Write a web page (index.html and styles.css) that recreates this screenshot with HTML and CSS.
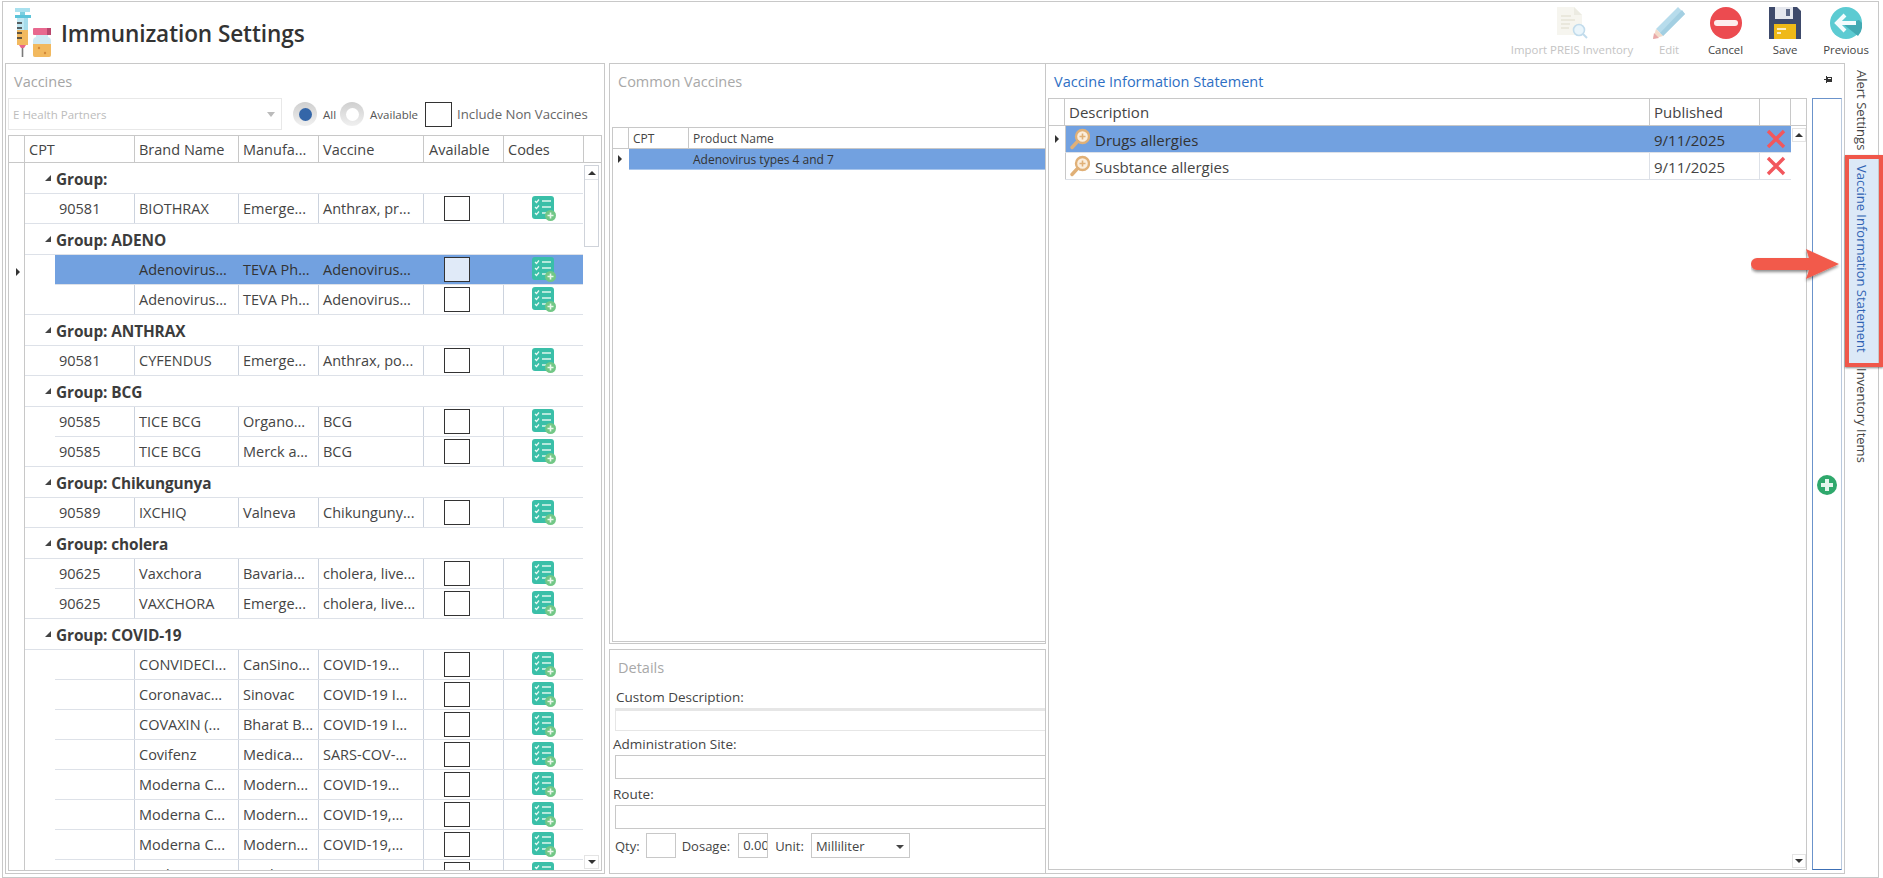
FILE: index.html
```html
<!DOCTYPE html>
<html lang="en">
<head>
<meta charset="utf-8">
<title>Immunization Settings</title>
<link rel="stylesheet" href="styles.css">
</head>
<body>
<svg class="defs" width="0" height="0" aria-hidden="true">
  <symbol id="codes" viewBox="0 0 24 25">
    <rect x="0" y="0" width="22" height="23" rx="3" fill="#3abfa8"/>
    <path d="M3 5l1.5 1.5L7 3.5M3 11l1.5 1.5L7 9.5M3 17l1.5 1.5L7 15.5" fill="none" stroke="#e6f8f3" stroke-width="1.2"/>
    <path d="M10 5h9M10 11h9M10 17h4" stroke="#b5e8dc" stroke-width="2"/>
    <circle cx="18.5" cy="19.5" r="5.5" fill="#72c786"/>
    <path d="M18.5 16.5v6M15.5 19.5h6" stroke="#e9f8ec" stroke-width="1.6"/>
  </symbol>
  <symbol id="mag" viewBox="0 0 20 22">
    <circle cx="12.5" cy="8.5" r="6.5" fill="#fbeedd" stroke="#e0b077" stroke-width="2.4"/>
    <path d="M7.5 13.5L2 19.5" stroke="#e0b077" stroke-width="3.4" stroke-linecap="round"/>
    <path d="M12.5 5.5v6M9.5 8.5h6" stroke="#e0b077" stroke-width="1.6"/>
  </symbol>
  <symbol id="cross" viewBox="0 0 20 20">
    <path d="M2 2l16 16M18 2L2 18" stroke="#f2575d" stroke-width="3.4"/>
  </symbol>
</svg>

<div class="frame">
  <header class="topbar">
    <div class="brand">
      <svg class="brand-icon" viewBox="0 0 40 50" width="40" height="50" aria-hidden="true">
        <path d="M1 0h15v4H1z" fill="#a9e1ef"/>
        <path d="M6 4h5v3H6z" fill="#7ccfe0"/>
        <path d="M1 7h16v3H1z" fill="#5cc4da"/>
        <path d="M3 10h11v12H3z" fill="#bfe7f2"/>
        <path d="M10 10h4v27h-4z" fill="#8fd4e6" opacity=".55"/>
        <path d="M3 22h11v15H3z" fill="#f2b95f"/>
        <path d="M3 15h5M3 20h5M3 25h5M3 30h5" stroke="#333" stroke-width="1.4"/>
        <path d="M5 37h7l-2 3H7z" fill="#e8658a"/>
        <path d="M8.5 40v9" stroke="#7a7a7a" stroke-width="1.6"/>
        <rect x="19" y="20" width="18" height="7" rx="1" fill="#e8688f"/>
        <rect x="33" y="20" width="4" height="7" fill="#b9476e"/>
        <rect x="22" y="27" width="12" height="2" fill="#cfe9f4"/>
        <path d="M19 33q0-4 4-4h10q4 0 4 4v14q0 2-2 2H21q-2 0-2-2z" fill="#cfe9f4"/>
        <path d="M19 36h18v11q0 2-2 2H21q-2 0-2-2z" fill="#f2b95f"/>
        <circle cx="25" cy="40" r="1.2" fill="#d2893a"/><circle cx="31" cy="45" r="1.2" fill="#d2893a"/>
      </svg>
      <h1 class="page-title">Immunization Settings</h1>
    </div>
    <nav class="toolbar">
      <button class="tool tool-import is-off" type="button">
        <svg viewBox="0 0 32 32" width="32" height="32" aria-hidden="true">
          <path d="M1 0h17l8 8v20H1z" fill="#f6f5ef"/>
          <path d="M18 0l8 8h-8z" fill="#ecebe2"/>
          <path d="M5 9h10M5 13h14M5 17h9M5 21h8" stroke="#e6e4d8" stroke-width="1.6"/>
          <circle cx="23" cy="23" r="5.5" fill="#eaf5fb" stroke="#c2dcec" stroke-width="1.6"/>
          <path d="M27 27l4 4" stroke="#c2dcec" stroke-width="2"/>
        </svg>
        <span>Import PREIS Inventory</span>
      </button>
      <button class="tool tool-edit is-off" type="button">
        <svg viewBox="0 0 32 32" width="32" height="32" aria-hidden="true">
          <path d="M25 0l7 7L10 29 3 22z" fill="#b7dcec"/>
          <path d="M29 3l3 4L10 29l-3-3z" fill="#a3cfe2"/>
          <path d="M3 22l7 7-10 3z" fill="#f3dccb"/>
          <path d="M0 32l1-6 5 5z" fill="#e9a8a8"/>
        </svg>
        <span>Edit</span>
      </button>
      <button class="tool tool-cancel" type="button">
        <svg viewBox="0 0 32 32" width="32" height="32" aria-hidden="true">
          <circle cx="16" cy="16" r="16" fill="#ec4b50"/>
          <rect x="4" y="13" width="24" height="6" rx="3" fill="#fdeeee"/>
        </svg>
        <span>Cancel</span>
      </button>
      <button class="tool tool-save" type="button">
        <svg viewBox="0 0 32 32" width="32" height="32" aria-hidden="true">
          <path d="M0 0h28l4 4v28H0z" fill="#3e4a6b"/>
          <rect x="6" y="0" width="18" height="12" fill="#e6e8ee"/>
          <rect x="17" y="2" width="4" height="7" fill="#5b6785"/>
          <rect x="5" y="17" width="22" height="15" fill="#efb917"/>
          <path d="M8 22h9M8 26h4" stroke="#fff" stroke-width="1.5"/>
        </svg>
        <span>Save</span>
      </button>
      <button class="tool tool-prev" type="button">
        <svg viewBox="0 0 32 32" width="32" height="32" aria-hidden="true">
          <circle cx="16" cy="16" r="16" fill="#5ccbd2"/>
          <path d="M13 17l15 12a16 16 0 0 0 4-13l-3-3-10 3z" fill="#43aab3"/>
          <path d="M15 8l-8 8 8 8M8 16h18" fill="none" stroke="#f4fcfd" stroke-width="4"/>
        </svg>
        <span>Previous</span>
      </button>
    </nav>
  </header>

  <main class="workspace">
    <section class="panel panel-vaccines">
      <h2 class="panel-title">Vaccines</h2>
      <div class="filters">
        <div class="combo"><span>E Health Partners</span><i class="combo-caret"></i></div>
        <span class="radio radio-on"><i></i></span><span class="radio-label label-all">All</span>
        <span class="radio"><i></i></span><span class="radio-label label-available">Available</span>
        <span class="filter-check"></span><span class="filter-label">Include Non Vaccines</span>
      </div>
      <div class="vgrid">
        <div class="vhead">
          <div class="vhead-corner"></div>
          <div class="vhead-cell w-cpt">CPT</div>
          <div class="vhead-cell w-brand">Brand Name</div>
          <div class="vhead-cell w-man">Manufa...</div>
          <div class="vhead-cell w-vac">Vaccine</div>
          <div class="vhead-cell w-av">Available</div>
          <div class="vhead-cell w-code">Codes</div>
        </div>
        <div class="vbody">
          <div class="row-gutter"><i class="row-marker marker-left"></i></div>
          <div class="vrows">
            <div class="group"><i class="tri"></i>Group:</div>
            <div class="drow"><div>90581</div><div>BIOTHRAX</div><div>Emerge...</div><div>Anthrax, pr...</div><div class="c-av"><span class="chk"></span></div><div class="c-code"><svg class="code-ic"><use href="#codes"/></svg></div></div>
            <div class="group"><i class="tri"></i>Group: ADENO</div>
            <div class="drow is-selected"><div></div><div>Adenovirus...</div><div>TEVA Ph...</div><div>Adenovirus...</div><div class="c-av"><span class="chk"></span></div><div class="c-code"><svg class="code-ic"><use href="#codes"/></svg></div></div>
            <div class="drow"><div></div><div>Adenovirus...</div><div>TEVA Ph...</div><div>Adenovirus...</div><div class="c-av"><span class="chk"></span></div><div class="c-code"><svg class="code-ic"><use href="#codes"/></svg></div></div>
            <div class="group"><i class="tri"></i>Group: ANTHRAX</div>
            <div class="drow"><div>90581</div><div>CYFENDUS</div><div>Emerge...</div><div>Anthrax, po...</div><div class="c-av"><span class="chk"></span></div><div class="c-code"><svg class="code-ic"><use href="#codes"/></svg></div></div>
            <div class="group"><i class="tri"></i>Group: BCG</div>
            <div class="drow"><div>90585</div><div>TICE BCG</div><div>Organo...</div><div>BCG</div><div class="c-av"><span class="chk"></span></div><div class="c-code"><svg class="code-ic"><use href="#codes"/></svg></div></div>
            <div class="drow"><div>90585</div><div>TICE BCG</div><div>Merck a...</div><div>BCG</div><div class="c-av"><span class="chk"></span></div><div class="c-code"><svg class="code-ic"><use href="#codes"/></svg></div></div>
            <div class="group"><i class="tri"></i>Group: Chikungunya</div>
            <div class="drow"><div>90589</div><div>IXCHIQ</div><div>Valneva</div><div>Chikunguny...</div><div class="c-av"><span class="chk"></span></div><div class="c-code"><svg class="code-ic"><use href="#codes"/></svg></div></div>
            <div class="group"><i class="tri"></i>Group: cholera</div>
            <div class="drow"><div>90625</div><div>Vaxchora</div><div>Bavaria...</div><div>cholera, live...</div><div class="c-av"><span class="chk"></span></div><div class="c-code"><svg class="code-ic"><use href="#codes"/></svg></div></div>
            <div class="drow"><div>90625</div><div>VAXCHORA</div><div>Emerge...</div><div>cholera, live...</div><div class="c-av"><span class="chk"></span></div><div class="c-code"><svg class="code-ic"><use href="#codes"/></svg></div></div>
            <div class="group"><i class="tri"></i>Group: COVID-19</div>
            <div class="drow"><div></div><div>CONVIDECI...</div><div>CanSino...</div><div>COVID-19...</div><div class="c-av"><span class="chk"></span></div><div class="c-code"><svg class="code-ic"><use href="#codes"/></svg></div></div>
            <div class="drow"><div></div><div>Coronavac...</div><div>Sinovac</div><div>COVID-19 I...</div><div class="c-av"><span class="chk"></span></div><div class="c-code"><svg class="code-ic"><use href="#codes"/></svg></div></div>
            <div class="drow"><div></div><div>COVAXIN (...</div><div>Bharat B...</div><div>COVID-19 I...</div><div class="c-av"><span class="chk"></span></div><div class="c-code"><svg class="code-ic"><use href="#codes"/></svg></div></div>
            <div class="drow"><div></div><div>Covifenz</div><div>Medica...</div><div>SARS-COV-...</div><div class="c-av"><span class="chk"></span></div><div class="c-code"><svg class="code-ic"><use href="#codes"/></svg></div></div>
            <div class="drow"><div></div><div>Moderna C...</div><div>Modern...</div><div>COVID-19...</div><div class="c-av"><span class="chk"></span></div><div class="c-code"><svg class="code-ic"><use href="#codes"/></svg></div></div>
            <div class="drow"><div></div><div>Moderna C...</div><div>Modern...</div><div>COVID-19,...</div><div class="c-av"><span class="chk"></span></div><div class="c-code"><svg class="code-ic"><use href="#codes"/></svg></div></div>
            <div class="drow"><div></div><div>Moderna C...</div><div>Modern...</div><div>COVID-19,...</div><div class="c-av"><span class="chk"></span></div><div class="c-code"><svg class="code-ic"><use href="#codes"/></svg></div></div>
            <div class="drow"><div></div><div>Moderna C...</div><div>Modern...</div><div>COVID-19,...</div><div class="c-av"><span class="chk"></span></div><div class="c-code"><svg class="code-ic"><use href="#codes"/></svg></div></div>
          </div>
          <div class="vscroll">
            <div class="scroll-up-thumb"><span class="sbtn"><i class="up"></i></span></div>
            <span class="sbtn sbtn-box"><i class="down"></i></span>
          </div>
        </div>
      </div>
    </section>

    <div class="middle">
      <section class="panel panel-common">
        <h2 class="panel-title title-mid">Common Vaccines</h2>
        <div class="cgrid">
          <div class="chead"><div class="chead-corner"></div><div class="chead-cpt">CPT</div><div class="chead-name">Product Name</div></div>
          <div class="cbody">
            <div class="c-gutter"><i class="row-marker"></i></div>
            <div class="crow"><div class="crow-cpt"></div><div class="crow-name">Adenovirus types 4 and 7</div></div>
          </div>
        </div>
      </section>
      <section class="panel panel-details">
        <h2 class="panel-title title-mid">Details</h2>
        <label class="field-label lbl-custom">Custom Description:</label>
        <div class="input input-disabled"></div>
        <label class="field-label lbl-site">Administration Site:</label>
        <div class="input input-site"></div>
        <label class="field-label lbl-route">Route:</label>
        <div class="input input-route"></div>
        <div class="qty-row">
          <span>Qty:</span><span class="mini"></span>
          <span class="dose-label">Dosage:</span><span class="mini mini-value">0.00</span>
          <span class="unit-label">Unit:</span>
          <span class="unit-select">Milliliter<i class="caret"></i></span>
        </div>
      </section>
    </div>

    <section class="panel-vis">
      <div class="vis-head">
        <h2 class="vis-title">Vaccine Information Statement</h2>
        <svg class="pin" viewBox="0 0 9 7" width="9" height="7" aria-hidden="true"><path d="M0 3h2v1H0zM2 0h1v7H2zM3 1h5v1H3zM3 5h5v1H3zM7 1h1v5H7zM3 2h4v3H3z" fill="#333"/><path d="M4 2h3v1H4z" fill="#fff"/></svg>
      </div>
      <div class="vis-body">
        <div class="sgrid">
          <div class="shead">
            <div class="shead-corner"></div>
            <div class="shead-desc">Description</div>
            <div class="shead-pub">Published</div>
            <div class="shead-x"></div>
          </div>
          <div class="sbody">
            <div class="s-gutter"><i class="row-marker"></i></div>
            <div class="srows">
              <div class="srow is-selected"><div class="s-desc"><svg class="mag-ic"><use href="#mag"/></svg><span class="s-text">Drugs allergies</span></div><div class="s-pub">9/11/2025</div><div class="s-x"><svg class="x-ic"><use href="#cross"/></svg></div></div>
              <div class="srow"><div class="s-desc"><svg class="mag-ic"><use href="#mag"/></svg><span class="s-text">Susbtance allergies</span></div><div class="s-pub">9/11/2025</div><div class="s-x"><svg class="x-ic"><use href="#cross"/></svg></div></div>
            </div>
            <div class="sscroll">
              <span class="sbtn sbtn-box"><i class="up"></i></span>
              <span class="sbtn sbtn-box"><i class="down"></i></span>
            </div>
          </div>
        </div>
        <div class="addstrip">
          <svg viewBox="0 0 20 20" width="20" height="20" aria-hidden="true">
            <circle cx="10" cy="10" r="10" fill="#2fa86c"/>
            <path d="M10 4v12M4 10h12" stroke="#e4f6ec" stroke-width="4"/>
          </svg>
        </div>
      </div>
    </section>

    <aside class="tabs">
      <div class="tab tab-alert">Alert Settings</div>
      <div class="tab tab-vis">Vaccine Information Statement</div>
      <div class="tab tab-inv">Inventory Items</div>
    </aside>
  </main>
</div>

<div class="callout-box"></div>
<svg class="callout-arrow" viewBox="0 0 92 36" width="92" height="36" aria-hidden="true">
  <defs><filter id="sh" x="-10%" y="-20%" width="120%" height="150%"><feDropShadow dx="0" dy="2" stdDeviation="1.500" flood-color="#000" flood-opacity=".45"/></filter></defs>
  <path d="M6 11h52l-3-9 33 15-33 15 3-9H6a5.500 5.500 0 0 1 0-12z" fill="#f25a4b" filter="url(#sh)"/>
</svg>
</body>
</html>
```
FILE: styles.css
```css
* { box-sizing: border-box; }
html, body { margin: 0; padding: 0; height: 878px; overflow: hidden; background: #fff; }
body { font-family: "Open Sans", "Noto Sans", sans-serif; color: #444; position: relative; }
.defs { position: absolute; }
h1, h2 { margin: 0; font-weight: 400; }
i { display: block; }

.frame { margin: 1px 4px 0 2px; height: 877px; border: 1px solid #c8c8c8; }

/* top bar */
.topbar { height: 61px; display: flex; justify-content: space-between; }
.brand { display: flex; align-items: flex-start; padding: 5px 0 0 11px; }
.brand-icon { margin-top: 1px; }
.page-title { font-size: 22.6px; font-weight: 600; color: #333; margin: 11px 0 0 7px; line-height: 32px; letter-spacing: -.1px; }
.toolbar { display: flex; margin-right: -2px; }
.tool { border: 0; background: none; padding: 5px 0 0; margin: 0; display: flex; flex-direction: column; align-items: center; font: inherit; font-size: 11.4px; color: #444; }
.tool span { margin-top: 3px; line-height: 16px; white-space: nowrap; }
.tool-import { width: 146px; }
.tool-edit { width: 48px; }
.tool-cancel { width: 65px; }
.tool-save { width: 54px; }
.tool-prev { width: 68px; }
.is-off { color: #c4c4c4; }

/* panels */
.workspace { display: flex; height: 811px; padding-left: 2px; }
.panel { border: 1px solid #c8c8c8; }
.panel-title { font-size: 14.5px; color: #a5a5a5; line-height: 20px; padding: 8px 0 0 8px; }

.panel-vaccines { width: 600px; height: 811px; margin-right: 4px; }
.filters { display: flex; align-items: center; height: 32px; margin: 6px 0 0 2px; }
.combo { width: 274px; height: 32px; border: 1px solid #e8e8e8; display: flex; align-items: center; justify-content: space-between; padding: 0 3px 0 4px; font-size: 11.5px; color: #bcbcbc; }
.combo-caret { width: 0; height: 0; border: 4px solid transparent; border-top: 5px solid #bbb; border-bottom: 0; margin-right: 3px; }
.radio { width: 24px; height: 24px; border-radius: 50%; background: linear-gradient(#cfcfcf, #f0f0f0); display: flex; align-items: center; justify-content: center; }
.radio i { width: 13px; height: 13px; border-radius: 50%; background: #fff; }
.radio-on { margin-left: 11px; }
.radio-on i { background: #3466a8; }
.radio-label { font-size: 11.5px; color: #555; }
.label-all { margin: 0 4px 0 6px; }
.label-available { margin: 0 7px 0 6px; }
.filter-check { width: 27px; height: 25px; border: 1px solid #333; }
.filter-label { font-size: 13.2px; color: #666; margin-left: 5px; white-space: nowrap; }

.vgrid { margin: 5px 2px 0 2px; height: 736px; border: 1px solid #c8c8c8; display: flex; flex-direction: column; overflow: hidden; }
.vhead { display: flex; height: 27px; flex: none; border-bottom: 1px solid #c8c8c8; font-size: 14.5px; }
.vhead-corner { width: 16px; border-right: 1px solid #c8c8c8; }
.vhead-cell { padding-left: 4px; line-height: 27px; border-right: 1px solid #c8c8c8; white-space: nowrap; }
.w-cpt { width: 110px; }
.w-brand { width: 104px; }
.w-man { width: 80px; }
.w-vac { width: 105px; }
.w-av { width: 80px; padding-left: 5px; }
.w-code { width: 80px; }

.vbody { display: flex; flex: 1; min-height: 0; }
.row-gutter { width: 16px; flex: none; border-right: 1px solid #c8c8c8; }
.row-marker { width: 0; height: 0; border: 4px solid transparent; border-left: 4px solid #333; border-right: 0; margin-left: 7px; }
.marker-left { margin-top: 105px; }
.vrows { width: 558px; flex: none; overflow: hidden; }
.group { height: 32px; margin-top: -1px; border-top: 1px solid #dde1e8; border-bottom: 1px solid #dde1e8; padding: 2px 0 0 20px; display: flex; align-items: center; font-size: 15.4px; font-weight: 700; color: #3c3c3c; letter-spacing: -.1px; }
.vrows > .group:first-child { margin-top: 0; height: 31px; border-top: 0; }
.tri { width: 0; height: 0; border-left: 6px solid transparent; border-bottom: 6px solid #444; margin-right: 5px; margin-top: -2px; }
.drow { height: 30px; margin-left: 30px; display: grid; grid-template-columns: 80px 104px 80px 105px 80px 79px; border-bottom: 1px solid #dde1e8; font-size: 14.5px; }
.drow > div { border-right: 1px solid #ccd3de; padding-left: 4px; line-height: 30px; white-space: nowrap; overflow: hidden; }
.drow > div:last-child { border-right: 0; }
.drow > .c-av, .drow > .c-code { padding: 2px 0 0; display: flex; justify-content: center; }
.chk { width: 26px; height: 25px; border: 1px solid #333; background: #fff; margin-left: -13px; }
.code-ic { width: 24px; height: 25px; margin-left: 1px; }
.is-selected { background: #72a1e0; color: #333; }
.is-selected .chk { background: #e0eaf8; }
.drow.is-selected > div { border-right-color: #72a1e0; }

.vscroll { flex: 1; margin-top: 2px; padding: 0 2px 1px 1px; display: flex; flex-direction: column; justify-content: space-between; }
.scroll-up-thumb { height: 82px; border: 1px solid #cfd3da; }
.sbtn { display: flex; align-items: center; justify-content: center; height: 14px; border-bottom: 1px solid #dfe2e6; }
.sbtn-box { border: 1px solid #e4e4e4; }
.up { width: 0; height: 0; border: 4px solid transparent; border-bottom: 4px solid #333; border-top: 0; }
.down { width: 0; height: 0; border: 4px solid transparent; border-top: 4px solid #333; border-bottom: 0; }

/* middle */
.middle { width: 437px; display: flex; flex-direction: column; gap: 5px; flex: none; }
.panel-common { height: 581px; padding: 0 0 1px 2px; display: flex; flex-direction: column; }
.panel-common .panel-title { padding-left: 6px; }
.title-mid { color: #a8a8a8; }
.cgrid { flex: 1; margin-top: 35px; border: 1px solid #c8c8c8; border-right: 0; display: flex; flex-direction: column; }
.chead { height: 21px; display: flex; border-bottom: 1px solid #c8c8c8; font-size: 12px; line-height: 21px; }
.chead-corner { width: 16px; border-right: 1px solid #c8c8c8; }
.chead-cpt { width: 60px; padding-left: 4px; border-right: 1px solid #c8c8c8; }
.chead-name { padding-left: 4px; }
.cbody { display: flex; flex: 1; }
.c-gutter { width: 16px; flex: none; padding-top: 6px; }
.c-gutter .row-marker { margin-left: 5px; }
.crow { flex: 1; height: 21px; background: #72a1e0; display: flex; font-size: 12px; line-height: 21px; color: #333; border-bottom: 1px solid #a9c6ec; }
.crow-cpt { width: 59px; }
.crow-name { padding-left: 5px; }

.panel-details { height: 225px; padding: 0 0 0 2px; }
.panel-details .panel-title { padding-left: 6px; }
.field-label { display: block; font-size: 13.5px; color: #444; line-height: 18px; }
.lbl-custom { margin: 10px 0 0 4px; }
.lbl-site { margin: 4px 0 0 1px; }
.lbl-route { margin: 6px 0 0 1px; }
.input { margin: 2px 0 0 3px; height: 24px; border: 1px solid #c8c8c8; border-right: 0; }
.input-disabled { height: 23px; border-color: #e6e6e6; border-top-width: 3px; }
.qty-row { display: flex; align-items: center; margin: 4px 0 0 3px; height: 25px; font-size: 13px; color: #444; }
.mini { width: 30px; height: 25px; border: 1px solid #c8c8c8; margin-left: 6px; font-size: 13px; line-height: 23px; padding-left: 4px; overflow: hidden; white-space: nowrap; }
.dose-label { margin-left: 6px; }
.mini-value { margin-left: 8px; }
.unit-label { margin-left: 7px; }
.unit-select { width: 99px; height: 25px; border: 1px solid #c8c8c8; margin-left: 7px; padding: 0 5px 0 4px; display: flex; align-items: center; justify-content: space-between; }
.caret { width: 0; height: 0; border: 4px solid transparent; border-top: 4px solid #444; border-bottom: 0; margin-top: 2px; }

/* right panel */
.panel-vis { width: 799px; height: 811px; border: 1px solid #c8c8c8; border-left: 0; flex: none; padding-left: 2px; display: flex; flex-direction: column; }
.vis-head { height: 34px; display: flex; justify-content: space-between; align-items: flex-start; padding: 8px 11px 0 6px; }
.vis-title { font-size: 14.5px; color: #2e6fc4; line-height: 20px; }
.pin { margin-top: 4px; }
.vis-body { flex: 1; display: flex; padding-bottom: 3px; }
.sgrid { width: 759px; border: 1px solid #c8c8c8; display: flex; flex-direction: column; flex: none; }
.shead { height: 27px; flex: none; display: flex; border-bottom: 1px solid #c8c8c8; font-size: 15px; line-height: 27px; }
.shead-corner { width: 16px; border-right: 1px solid #c8c8c8; }
.shead-desc { width: 585px; padding-left: 4px; border-right: 1px solid #c8c8c8; }
.shead-pub { width: 110px; padding-left: 4px; border-right: 1px solid #c8c8c8; }
.shead-x { width: 31px; border-right: 1px solid #c8c8c8; }
.sbody { flex: 1; display: flex; min-height: 0; }
.s-gutter { width: 16px; flex: none; padding-top: 9px; }
.s-gutter .row-marker { margin-left: 6px; }
.srows { width: 726px; flex: none; }
.srow { height: 27px; display: flex; border-bottom: 1px solid #dde1e8; font-size: 15px; line-height: 29px; }
.srow::before { content: ""; width: 1px; margin-right: -1px; background: #c8c8c8; flex: none; }
.s-desc { width: 585px; display: flex; align-items: center; padding-left: 5px; border-right: 1px solid #dde1e8; }
.s-text { margin-top: 2px; line-height: 25px; }
.mag-ic { width: 20px; height: 22px; margin-right: 5px; flex: none; }
.s-pub { width: 110px; padding-left: 4px; border-right: 1px solid #dde1e8; }
.s-x { width: 31px; display: flex; align-items: center; justify-content: center; }
.x-ic { width: 20px; height: 20px; }
.srow.is-selected > div { border-right-color: #72a1e0; }
.sscroll { flex: 1; padding: 2px 0 1px 1px; display: flex; flex-direction: column; justify-content: space-between; }

.addstrip { width: 30px; margin-left: 5px; border: 1px solid #b9c9de; border-left: 1px solid #6b93cb; border-top: 1px solid #6b93cb; border-bottom: 1px solid #3c6fb5; padding: 376px 0 0 4px; flex: none; }

/* vertical tabs */
.tabs { flex: 1; display: flex; flex-direction: column; align-items: stretch; }
.tab { writing-mode: vertical-rl; font-size: 13px; line-height: 33px; white-space: nowrap; color: #444; }
.tab-alert { height: 92px; padding-top: 7px; }
.tab-vis { height: 211px; padding-top: 10px; background: #dce9f7; color: #2f62b3; }
.tab-inv { padding-top: 2px; }

/* annotation overlays */
.callout-box { position: absolute; left: 1845px; top: 155px; width: 38px; height: 212px; border: 4px solid #f0574a; box-shadow: 0 1px 2px rgba(0,0,0,.45); }
.callout-arrow { position: absolute; left: 1751px; top: 247px; }
```
